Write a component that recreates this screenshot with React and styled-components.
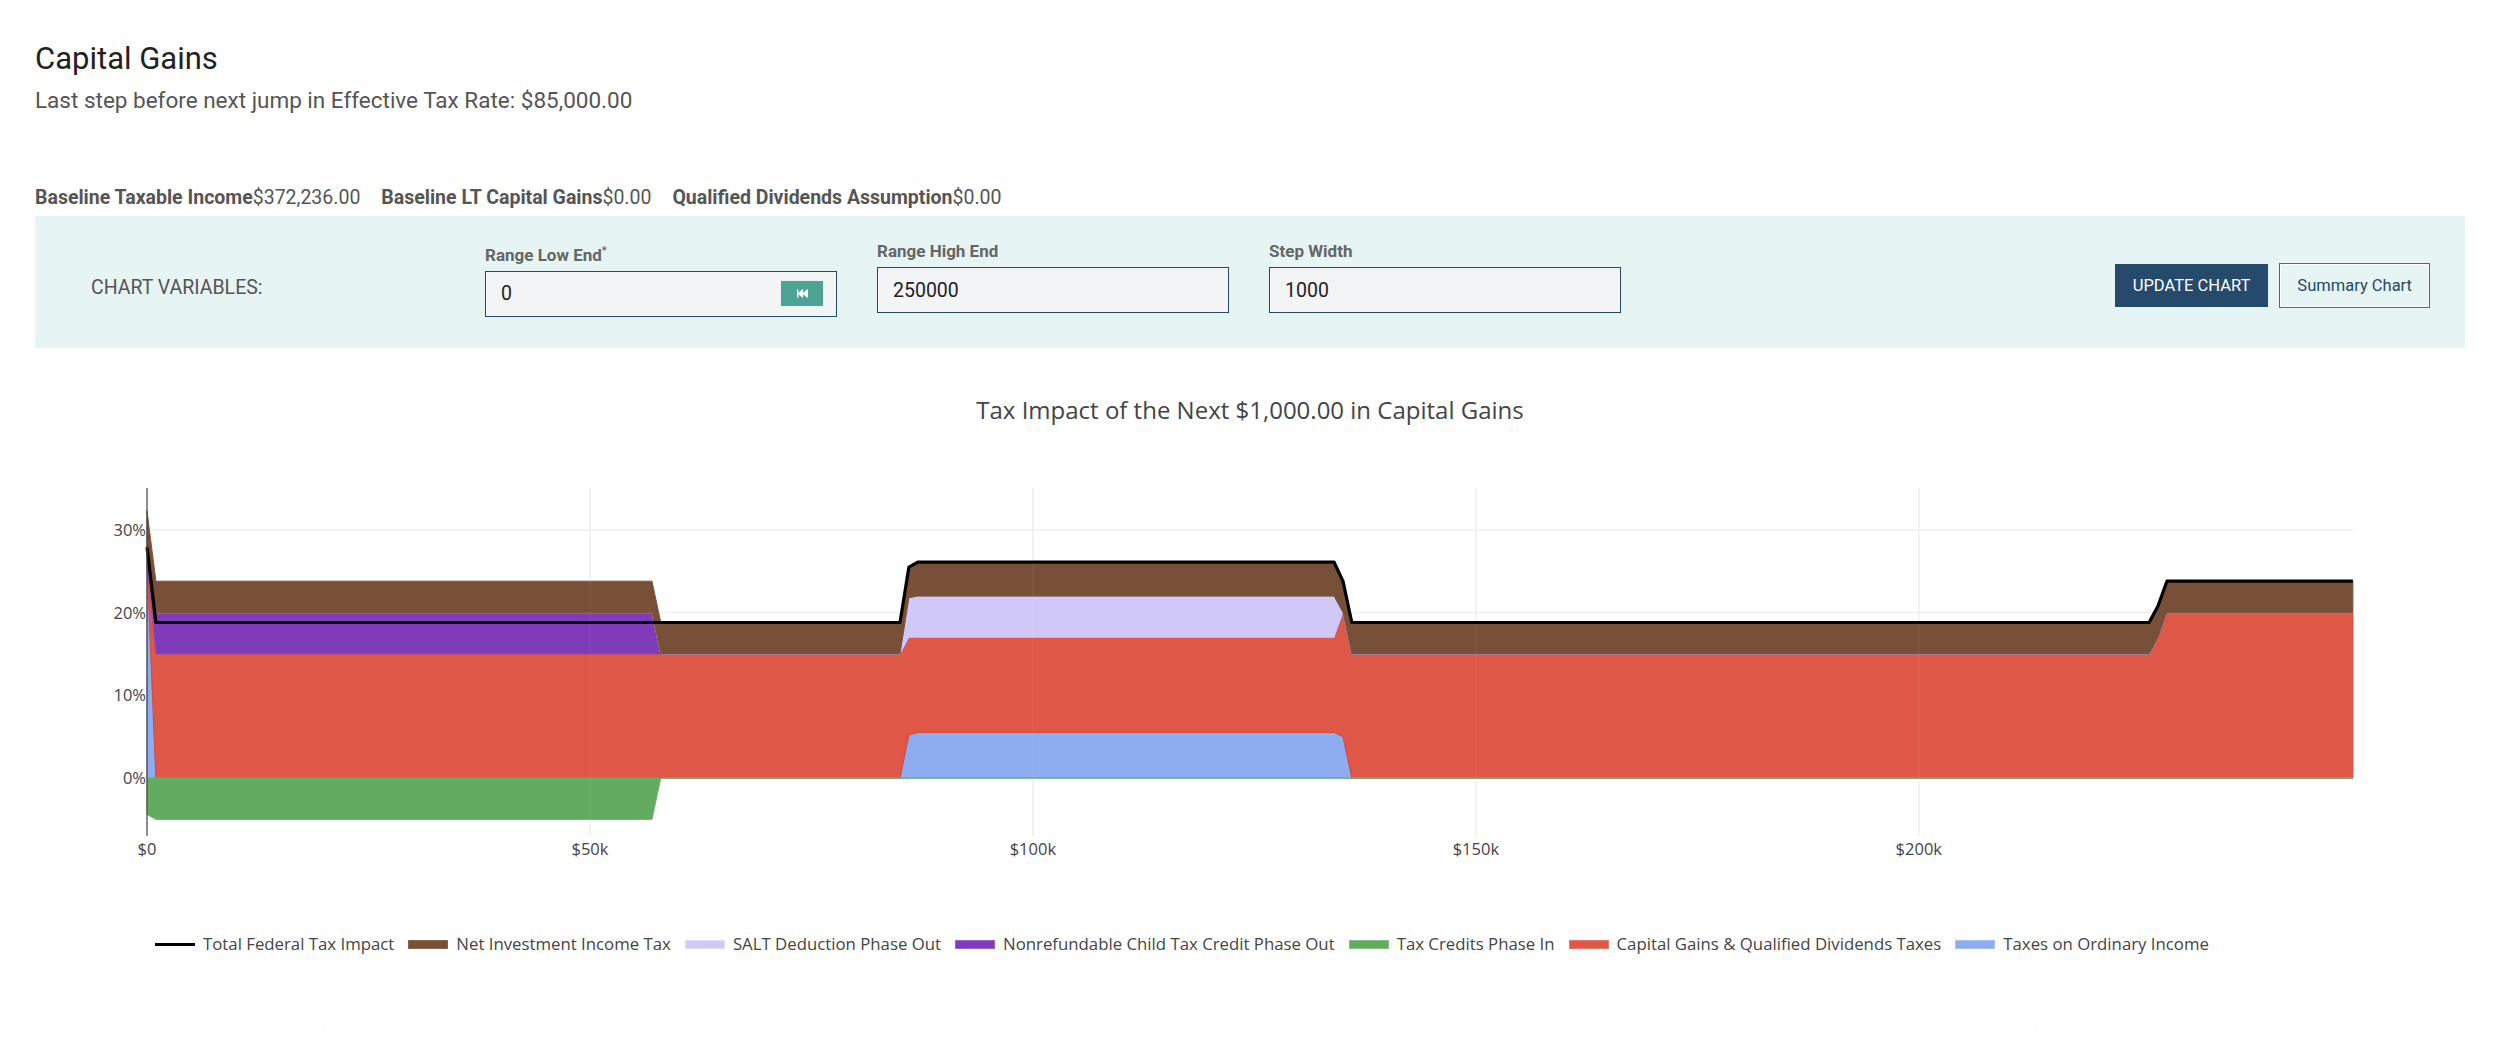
import React from 'react';
import styled, { createGlobalStyle } from 'styled-components';
import { FaFastBackward } from 'react-icons/fa';

const GlobalStyle = createGlobalStyle`
  html, body {
    margin: 0;
    padding: 0;
    background: #fff;
    overflow: hidden;
    font-family: Roboto, "Liberation Sans", sans-serif;
  }
`;

const Page = styled.div`
  padding: 41px 35px 0;
  box-sizing: border-box;
  width: 2500px;
`;

const Heading = styled.h1`
  margin: 0;
  font-size: 31px;
  line-height: 36px;
  font-weight: 400;
  color: #222;
`;

const SubHeading = styled.div`
  margin-top: 10px;
  font-size: 22.5px;
  line-height: 27px;
  color: #555;
`;

const StatsRow = styled.div`
  margin-top: 73px;
  display: flex;
  gap: 21px;
  font-size: 19.5px;
  line-height: 22px;
  color: #555;
  b { font-weight: 700; }
`;

const Panel = styled.div`
  margin-top: 7px;
  background: #e7f4f4;
  height: 132px;
  box-sizing: border-box;
  padding: 0 35px 0 56px;
  display: flex;
  align-items: center;
`;

const PanelLabel = styled.div`
  width: 394px;
  font-size: 19.5px;
  color: #555;
  padding-top: 10px;
`;

const Fields = styled.div`
  display: flex;
  gap: 40px;
  padding-bottom: 6px;
`;

const Field = styled.div`
  display: flex;
  flex-direction: column;
  gap: 6px;
  width: 352px;
`;

const FieldLabel = styled.label`
  font-size: 17px;
  line-height: 20px;
  font-weight: 700;
  color: #666;
  sup { font-size: 11px; }
`;

const InputBox = styled.div`
  height: 46px;
  box-sizing: border-box;
  border: 1.5px solid #274869;
  background: #f3f4f6;
  display: flex;
  align-items: center;
  padding: 0 12px 0 15px;
`;

const Input = styled.input`
  flex: 1;
  min-width: 0;
  border: none;
  outline: none;
  background: transparent;
  font-family: Roboto, "Liberation Sans", sans-serif;
  font-size: 19.5px;
  color: #222;
  padding: 0;
`;

const ResetButton = styled.button`
  width: 44px;
  height: 27px;
  border: 1px solid #e6f2f0;
  background: #4ea395;
  color: #fff;
  display: flex;
  align-items: center;
  justify-content: center;
  padding: 0;
  font-size: 11px;
`;

const Actions = styled.div`
  margin-left: auto;
  display: flex;
  gap: 10px;
  padding-top: 6px;
`;

const ActionButton = styled.button`
  height: 45px;
  box-sizing: border-box;
  padding: 0 ${p => (p.$primary ? 18 : 17)}px;
  font-family: Roboto, "Liberation Sans", sans-serif;
  font-size: 16.5px;
  border: 1px solid ${p => (p.$primary ? '#e6f2f2' : '#4a6a89')};
  background: ${p => (p.$primary ? '#254a6b' : 'transparent')};
  color: ${p => (p.$primary ? '#fff' : '#254a6b')};
  text-transform: ${p => (p.$primary ? 'uppercase' : 'none')};
  box-shadow: ${p => (p.$primary ? 'none' : 'inset 0 0 0 1px #fff')};
`;

const ChartTitle = styled.div`
  margin-top: 47px;
  text-align: center;
  font-family: "Open Sans", "Liberation Sans", sans-serif;
  font-size: 24px;
  line-height: 30px;
  color: #444;
`;

const ChartSvg = styled.svg`
  display: block;
  width: 2430px;
  height: 450px;
  margin-top: 4px;
  font-family: "Open Sans", "Liberation Sans", sans-serif;
`;

const Legend = styled.div`
  margin: 53px 0 0 120px;
  display: flex;
  gap: 14px;
  font-family: "Open Sans", "Liberation Sans", sans-serif;
  font-size: 16.8px;
  line-height: 24px;
  color: #444;
`;

const LegendItem = styled.div`
  display: flex;
  align-items: center;
  gap: 8px;
`;

const Swatch = styled.span`
  width: 40px;
  box-sizing: border-box;
  height: ${p => (p.$line ? 3 : 9)}px;
  background: ${p => p.$color};
  border: ${p => (p.$line ? 'none' : `1px solid ${p.$edge}`)};
`;

const NextCard = styled.div`
  margin: 61px 0 0 290px;
  width: 1710px;
  height: 120px;
  border-radius: 10px;
  background: #fff;
  box-shadow: 0 -2px 10px rgba(0, 0, 0, 0.025);
`;

// chart geometry (svg coordinates)
const X0 = 112;
const KX = 8.859;
const Y0 = 349;
const KY = 8.27;
const TOP = 59;
const BOTTOM = 407;
const px = k => X0 + k * KX;
const py = v => Y0 - v * KY;

// [k$, ordinary, capGains, child, salt, niit, credits]
const ROWS = [
  [0, 26, 0.5, 1.5, 0, 4.3, -4.4],
  [1, 0, 15, 5, 0, 3.8, -5],
  [57, 0, 15, 5, 0, 3.8, -5],
  [58, 0, 15, 0, 0, 3.8, 0],
  [85, 0, 15, 0, 0, 3.8, 0],
  [86, 5.2, 11.8, 0, 4.8, 3.7, 0],
  [87, 5.5, 11.5, 0, 5, 4.1, 0],
  [134, 5.5, 11.5, 0, 5, 4.1, 0],
  [135, 5, 15, 0, 0, 3.8, 0],
  [136, 0, 15, 0, 0, 3.8, 0],
  [226, 0, 15, 0, 0, 3.8, 0],
  [227, 0, 17, 0, 0, 3.8, 0],
  [228, 0, 20, 0, 0, 3.8, 0],
  [249, 0, 20, 0, 0, 3.8, 0],
];

const STACK = [
  { idx: 1, fill: '#8dadf0', edge: '#7499e6' },
  { idx: 2, fill: '#de5747', edge: '#d4493b' },
  { idx: 3, fill: '#7f3bb9', edge: '#8a4bc4' },
  { idx: 4, fill: '#d0c9f8', edge: '#c5bdf3' },
  { idx: 5, fill: '#784f37', edge: '#7c5540' },
];

const LEGEND = [
  { name: 'Total Federal Tax Impact', color: '#000', line: true },
  { name: 'Net Investment Income Tax', color: '#784f37', edge: '#8a6650' },
  { name: 'SALT Deduction Phase Out', color: '#d0c9f8', edge: '#e2ddfb' },
  { name: 'Nonrefundable Child Tax Credit Phase Out', color: '#7f3bb9', edge: '#9a66cc' },
  { name: 'Tax Credits Phase In', color: '#62ab60', edge: '#85c083' },
  { name: 'Capital Gains & Qualified Dividends Taxes', color: '#de5747', edge: '#e57a6d' },
  { name: 'Taxes on Ordinary Income', color: '#8dadf0', edge: '#a9c2f4' },
];

const pts = list => list.map(([x, y]) => `${x.toFixed(1)},${y.toFixed(1)}`).join(' ');

function stackedAreas() {
  return STACK.map(s => {
    const upper = [];
    const lower = [];
    ROWS.forEach(r => {
      let base = 0;
      for (let i = 1; i < s.idx; i++) base += r[i];
      lower.push([px(r[0]), py(base)]);
      upper.push([px(r[0]), py(base + r[s.idx])]);
    });
    return { ...s, points: pts([...upper, ...lower.reverse()]) };
  });
}

function TaxChart() {
  const areas = stackedAreas();
  const credits = pts([
    ...ROWS.map(r => [px(r[0]), py(r[6])]),
    ...ROWS.slice().reverse().map(r => [px(r[0]), py(0)]),
  ]);
  const total = pts(ROWS.map(r => [px(r[0]), py(r[1] + r[2] + r[3] + r[4] + r[5] + r[6])]));
  const xTicks = [0, 50, 100, 150, 200];
  const yTicks = [0, 10, 20, 30];

  return (
    <ChartSvg viewBox="0 0 2430 450">
      {yTicks.map(t => (
        <line key={'gy' + t} x1={X0} x2={px(249)} y1={py(t)} y2={py(t)} stroke="#eee" strokeWidth="1.5" />
      ))}
      {xTicks.slice(1).map(t => (
        <line key={'gx' + t} x1={px(t)} x2={px(t)} y1={TOP} y2={BOTTOM} stroke="#eee" strokeWidth="1.5" />
      ))}
      {areas.map(a => (
        <polygon key={a.idx} points={a.points} fill={a.fill} stroke={a.edge} strokeWidth="1" strokeLinejoin="round" />
      ))}
      <polygon points={credits} fill="#62ab60" stroke="#6db56b" strokeWidth="1" />
      {xTicks.slice(1).map(t => (
        <line key={'go' + t} x1={px(t)} x2={px(t)} y1={TOP} y2={BOTTOM} stroke="rgba(255,255,255,0.06)" strokeWidth="1.5" />
      ))}
      <polyline points={total} fill="none" stroke="#000" strokeWidth="3.2" strokeLinejoin="round" />
      <line x1={X0} x2={X0} y1={TOP} y2={BOTTOM} stroke="#444" strokeWidth="1.2" />
      {yTicks.map(t => (
        <text key={'ty' + t} x={X0 - 1} y={py(t) + 6} textAnchor="end" fontSize="16.5" fill="#444">
          {t}%
        </text>
      ))}
      {xTicks.map(t => (
        <text key={'tx' + t} x={px(t)} y={426} textAnchor="middle" fontSize="16.5" fill="#444">
          {t === 0 ? '$0' : `$${t}k`}
        </text>
      ))}
    </ChartSvg>
  );
}

export default function App() {
  return (
    <>
      <GlobalStyle />
      <Page>
        <Heading>Capital Gains</Heading>
        <SubHeading>Last step before next jump in Effective Tax Rate: $85,000.00</SubHeading>

        <StatsRow>
          <span><b>Baseline Taxable Income</b>$372,236.00</span>
          <span><b>Baseline LT Capital Gains</b>$0.00</span>
          <span><b>Qualified Dividends Assumption</b>$0.00</span>
        </StatsRow>

        <Panel>
          <PanelLabel>CHART VARIABLES:</PanelLabel>
          <Fields>
            <Field>
              <FieldLabel>Range Low End<sup>*</sup></FieldLabel>
              <InputBox>
                <Input defaultValue="0" />
                <ResetButton aria-label="reset"><FaFastBackward /></ResetButton>
              </InputBox>
            </Field>
            <Field>
              <FieldLabel>Range High End</FieldLabel>
              <InputBox>
                <Input defaultValue="250000" />
              </InputBox>
            </Field>
            <Field>
              <FieldLabel>Step Width</FieldLabel>
              <InputBox>
                <Input defaultValue="1000" />
              </InputBox>
            </Field>
          </Fields>
          <Actions>
            <ActionButton $primary>Update Chart</ActionButton>
            <ActionButton>Summary Chart</ActionButton>
          </Actions>
        </Panel>

        <ChartTitle>Tax Impact of the Next $1,000.00 in Capital Gains</ChartTitle>
        <TaxChart />

        <Legend>
          {LEGEND.map(l => (
            <LegendItem key={l.name}>
              <Swatch $color={l.color} $edge={l.edge} $line={l.line} />
              {l.name}
            </LegendItem>
          ))}
        </Legend>

        <NextCard />
      </Page>
    </>
  );
}
